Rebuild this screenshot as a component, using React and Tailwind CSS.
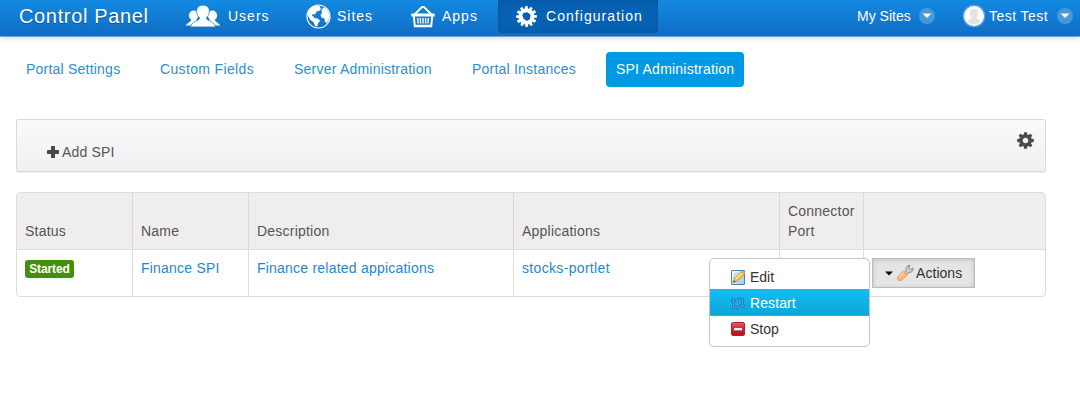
import React from 'react';

function UsersIcon() {
  return (
    <svg className="block h-[24px] w-[36px] shrink-0" viewBox="0 0 36 24" fill="#fff">
      <ellipse cx="8.500" cy="11.500" rx="4.600" ry="5" />
      <ellipse cx="27.500" cy="11.500" rx="4.600" ry="5" />
      <path d="M.5 21.600C2.200 19 5.800 18.200 6.800 15h4.500l.7 2.200C9 18.600 7 19.700 6 21.600zM35.500 21.600C33.800 19 30.200 18.200 29.200 15h-4.500L24 17.200c3 1.400 5 2.500 6 4.400z" />
      <path d="M18 1.200c4.500 0 6.700 2.700 6.300 6.500-.2 3-1.500 4.800-3 6.200.3 3.200 8.400 3.500 9.200 9H5.500c.8-5.500 8.900-5.800 9.200-9-1.500-1.400-2.800-3.200-3-6.200-.4-3.800 1.800-6.500 6.300-6.500z" stroke="#1478cf" strokeWidth=".7" />
    </svg>
  );
}

function GlobeIcon() {
  return (
    <svg className="block size-[25px] shrink-0" viewBox="0 0 25 25" fill="#fff">
      <circle cx="12.500" cy="12.500" r="11.500" fill="none" stroke="#fff" strokeWidth="1.200" />
      <path d="M1.500 11C2 5.500 6 1.800 11 1.300l3.500 1.200-.7 1.500 1.700.7-2.500 2.300-2.500.6L9 10.500l-2.300-.6-.8 2 1.800.6.5 1.600 3.500.4 2.500 2.300-2 2.200-1 3.200-1.700.3-2-4.300L4 15.500z" />
      <path d="M15.500 6.500l1.700-3 2.800 1 2.500 3.500 1 4.500-1 4-2 2.700-1.700-1.700-.4-3.200-2.700-.6-1.200-2.700L16 9z" />
    </svg>
  );
}

function BasketIcon() {
  return (
    <svg className="block h-[23px] w-[24px] shrink-0" viewBox="0 0 24 23" fill="none" stroke="#fff">
      <path d="M3.500 9.500L11 2h2l7.500 7.500" strokeWidth="1.800" />
      <path d="M.3 8.500h23.400v3H.3z" fill="#fff" stroke="none" />
      <path d="M2.800 11l1 10.300h16.400l1-10.300M3.500 20.800h17" strokeWidth="2" />
      <path d="M6.600 13l.6 5.500M9.300 13l.2 5.500M12 13v5.500M14.700 13l-.2 5.500M17.400 13l-.6 5.500" strokeWidth="1.400" />
    </svg>
  );
}

function ConfigIcon() {
  return (
    <svg className="block size-[21px] shrink-0" viewBox="-10.500 -10.500 21 21">
      <g fill="#fff">
        {[0, 30, 60, 90, 120, 150, 180, 210, 240, 270, 300, 330].map((a) => (
          <path key={a} d="M-1.800-7L-1.300-10.500 1.300-10.200 1.300-7z" transform={`rotate(${a})`} />
        ))}
      </g>
      <circle r="8" fill="#fff" />
      <path d="M-2.800-3.800L1-4.300 4-1.800 3.500 2.800.3 4.500-3 2.200-4.200-1.500z" fill="#0761b2" />
    </svg>
  );
}

function PlusIcon() {
  return (
    <svg className="block size-[12px] shrink-0" viewBox="0 0 12 12">
      <rect y="4" width="12" height="4" rx=".8" fill="#484848" />
      <rect x="4" width="4" height="12" rx=".8" fill="#484848" />
    </svg>
  );
}

function SettingsIcon() {
  return (
    <svg className="mt-[12px] mr-[11px] block size-[17px] shrink-0" viewBox="-8.500 -8.500 17 17">
      <g fill="#484b4e">
        {[0, 45, 90, 135, 180, 225, 270, 315].map((a) => (
          <path key={a} d="M-2-5L-1.400-8.300H1.400L2-5z" transform={`rotate(${a})`} />
        ))}
      </g>
      <circle r="4.500" fill="none" stroke="#484b4e" strokeWidth="3.400" />
    </svg>
  );
}

function CaretBadge() {
  return (
    <svg className="block size-[16px] shrink-0" viewBox="0 0 16 16">
      <circle cx="8" cy="8" r="8" fill="#4598db" />
      <path d="M3.500 5.500h9L8 10z" fill="#fff" />
    </svg>
  );
}

function Avatar() {
  return (
    <svg className="block size-[24px] shrink-0" viewBox="0 0 24 24">
      <circle cx="12" cy="12" r="11.300" fill="#58a6e6" />
      <circle cx="12" cy="12" r="10" fill="#fff" />
      <path d="M12 4.500c3 0 4.600 2 4.200 5-.2 2-1 3-1.700 4 .2 2 3 2 4 4a9 9 0 0 1-13 0c1-2 3.800-2 4-4-.7-1-1.500-2-1.700-4-.4-3 1.200-5 4.200-5z" fill="#e3e3e3" />
    </svg>
  );
}

function EditIcon() {
  return (
    <svg className="block size-[16px] shrink-0" viewBox="0 0 16 16">
      <defs>
        <linearGradient id="page" x2="1" y2="1">
          <stop stopColor="#fff" />
          <stop offset="1" stopColor="#99c5f0" />
        </linearGradient>
      </defs>
      <rect x="1.500" y="1.500" width="13" height="14" rx=".5" fill="url(#page)" stroke="#4b83bb" />
      <path d="M3.500 4.500h5M3.500 6.500h4M3.500 8.500h2" stroke="#bad1e5" />
      <path d="M3.300 13.500l1-4L12 2l3 2.800-7.700 7.500z" fill="#f3c34f" stroke="#ad8437" strokeWidth=".7" />
      <path d="M5.500 10L13 3" stroke="#ffed9b" strokeWidth="1.200" />
      <path d="M11 3l1.300-1.200c1.500-.5 3 1 2.500 2.500L13.700 5.500z" fill="#e7a277" />
      <path d="M3.300 13.500l.6-2.300 1.600 1.600z" fill="#433729" />
    </svg>
  );
}

function RestartIcon() {
  return (
    <svg className="block size-[16px] shrink-0" viewBox="0 0 16 16" fill="none">
      <path d="M3.500 5.500v7H9M7 4h5.500v6.500" stroke="#2272b8" strokeWidth="2.600" />
      <path d="M.9 6.200L3.500 3l2.700 3.200zM9.700 10l2.800 3.500 2.800-3.500z" fill="#48a5dc" stroke="#2272b8" strokeWidth=".9" />
      <path d="M3.500 5.500v7h5M7.500 4h5v7" stroke="#54b6e8" strokeWidth=".8" />
    </svg>
  );
}

function StopIcon() {
  return (
    <svg className="block size-[16px] shrink-0" viewBox="0 0 16 16">
      <defs>
        <linearGradient id="stop" x2="0" y2="1">
          <stop stopColor="#e36166" />
          <stop offset=".5" stopColor="#c9242d" />
          <stop offset="1" stopColor="#b80d18" />
        </linearGradient>
      </defs>
      <rect x="1.500" y="1.500" width="13" height="13" rx="1.500" fill="url(#stop)" stroke="#b3232b" />
      <rect x="3.800" y="6.700" width="8.400" height="3" fill="#fff" stroke="#9d1820" strokeWidth=".5" />
    </svg>
  );
}

function WrenchIcon() {
  return (
    <svg className="block size-[18px] shrink-0" viewBox="0 0 18 18">
      <path d="M8.500 8.500L10 6.500C9.300 3.500 11 1.500 14 1.300L12.700 4l1.800 1.500L17 4c.4 3-1.600 4.700-4.200 4.500L10.500 10.500z" fill="#c8cccd" stroke="#788184" strokeWidth=".9" />
      <path d="M7.500 7l3.800 3.800-5.300 5.300c-2.500 2-6-1.300-3.800-3.800z" fill="#ffb47d" stroke="#e58e5c" strokeWidth=".8" />
      <path d="M7.600 9L3.500 13.300" stroke="#ffd5b3" strokeWidth="1.400" />
    </svg>
  );
}

const columns = [
  { title: 'Status' },
  { title: 'Name' },
  { title: 'Description' },
  { title: 'Applications' },
  { title: 'Connector Port' },
  { title: '' },
];

const gridCols = 'grid grid-cols-[116px_116px_265px_266px_84px_1fr]';

export default function App() {
  return (
    <div className="h-[401px] w-[1080px] overflow-hidden bg-white font-['Liberation_Sans',Arial,sans-serif] text-[14px] leading-5 text-[#555]">
      <header className="flex h-[37px] border-b border-[#6fa5da] bg-linear-to-b from-[#128ae0] to-[#116cc4] text-white shadow-[0_1px_5px_rgba(30,70,120,0.22)]">
        <h1 className="w-[167px] pl-[19px] pt-[4px] text-[20px] leading-6 tracking-[0.65px] [text-shadow:0_1px_1px_#0b4f94]">Control Panel</h1>
        <nav className="flex text-[14px] tracking-[1px]">
          <a className="flex h-8 w-[139px] items-center gap-[7px] pl-[18px]"><UsersIcon />Users</a>
          <a className="flex h-8 w-[104px] items-center gap-[6px]"><GlobeIcon />Sites</a>
          <a className="flex h-8 w-[88px] items-center gap-[7px] pl-px"><BasketIcon />Apps</a>
          <a className="flex h-[33px] w-[160px] items-center gap-[9px] rounded-b-[4px] bg-[#0761b2] pb-px pl-[18px] tracking-[1.05px] shadow-[inset_0_0_5px_#06529c]"><ConfigIcon />Configuration</a>
        </nav>
        <div className="flex h-8 items-center pl-[199px]">
          <span className="w-[62px]">My Sites</span>
          <CaretBadge />
          <div className="ml-[27px] flex items-center gap-[3px]"><Avatar /><span className="w-[68px] tracking-[0.45px]">Test Test</span></div>
          <CaretBadge />
        </div>
      </header>

      <nav className="flex h-[82px] items-start pt-[15px] tracking-[0.22px] text-[#2a90d0]">
        <a className="w-[134px] py-[7px] pl-[26px] whitespace-nowrap">Portal Settings</a>
        <a className="w-[134px] py-[7px] pl-[26px] tracking-[0.35px] whitespace-nowrap">Custom Fields</a>
        <a className="w-[178px] py-[7px] pl-[26px] whitespace-nowrap">Server Administration</a>
        <a className="w-[160px] py-[7px] pl-[26px] whitespace-nowrap">Portal Instances</a>
        <a className="h-[35px] w-[138px] rounded-[4px] bg-[#0099e6] py-[7px] pl-[10px] whitespace-nowrap text-white">SPI Administration</a>
      </nav>

      <main className="w-[1046px] pl-[16px]">
        <div className="flex h-[53px] items-start justify-between rounded-[2px] border border-[#dadada] bg-linear-to-b from-[#fafafa] to-[#f0f0f0] shadow-[0_1px_1px_#eee]">
          <button className="ml-[30px] mt-[22px] flex h-5 items-center gap-[3px] tracking-[0.15px] text-[#555]"><PlusIcon />Add SPI</button>
          <SettingsIcon />
        </div>

        <section className="mt-5 overflow-hidden rounded-[4px] border border-[#dcdcdc] tracking-[0.22px]">
          <div className={`${gridCols} h-[56px] bg-[#efeded]`}>
            {columns.map((c, i) => (
              <div key={i} className="flex items-end border-r border-[#d9d9d9] pb-[8px] pl-[8px] last:border-r-0">{c.title}</div>
            ))}
          </div>
          <div className={`${gridCols} h-[47px] border-t border-[#dcdcdc] text-[#1f87cf]`}>
            <div className="border-r border-[#dcdcdc] pt-[10px] pl-[8px]">
              <span className="flex h-[18px] w-[49px] items-center justify-center rounded-[3px] bg-[#468f0a] text-[12px] font-bold tracking-[-0.1px] text-white">Started</span>
            </div>
            <div className="border-r border-[#dcdcdc] pt-[8px] pl-[8px]">Finance SPI</div>
            <div className="border-r border-[#dcdcdc] pt-[8px] pl-[8px]">Finance related appications</div>
            <div className="border-r border-[#dcdcdc] pt-[8px] pl-[8px] tracking-[0.33px]">stocks-portlet</div>
            <div className="border-r border-[#dcdcdc]" />
            <div className="pt-[8px] pl-[8px]">
              <button className="flex h-[30px] w-[103px] items-center border border-[#bcbcbc] bg-[#e5e5e5] pl-[12px] tracking-[0.05px] text-[#333] shadow-[inset_0_1px_4px_rgba(0,0,0,0.18)]">
                <svg className="mr-[3px] h-[5px] w-[8px]" viewBox="0 0 8 5"><path d="M0 .5h8L4 4.500z" fill="#000" /></svg>
                <WrenchIcon />
                <span className="ml-[2px]">Actions</span>
              </button>
            </div>
          </div>
        </section>
      </main>

      <div className="absolute left-[709px] top-[258px] h-[89px] w-[161px] rounded-[5px] border border-[#c5c5c5] bg-white pt-[5px] text-[#333]">
        <a className="flex h-[25px] items-center gap-[4px] pl-[20px]"><EditIcon />Edit</a>
        <a className="flex h-[27px] items-center gap-[4px] border-y border-[#4b9edf] bg-linear-to-b from-[#12bdf0] to-[#0da6dc] pl-[20px] tracking-[0.1px] text-white"><RestartIcon />Restart</a>
        <a className="flex h-[25px] items-center gap-[4px] pl-[20px]"><StopIcon />Stop</a>
      </div>
    </div>
  );
}
